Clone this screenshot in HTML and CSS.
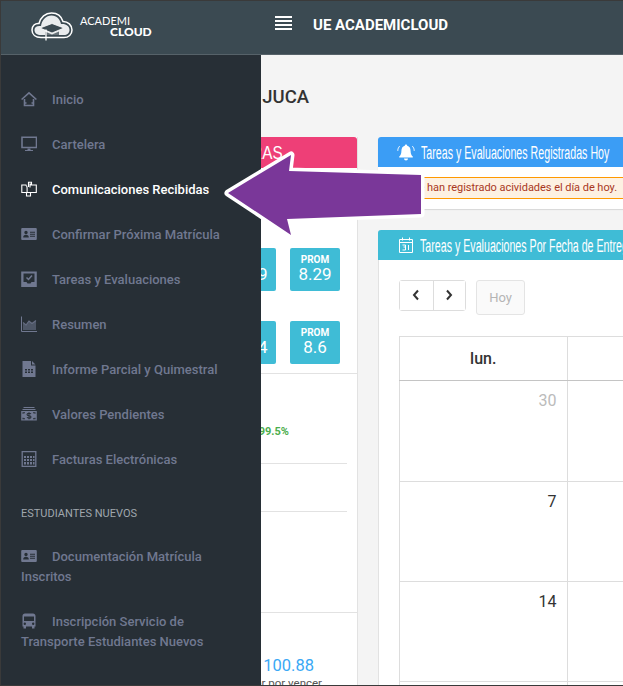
FILE: index.html
```html
<!DOCTYPE html>
<html lang="es">
<head>
<meta charset="utf-8">
<title>UE AcademiCloud</title>
<link rel="stylesheet" href="styles.css">
</head>
<body>
<div class="app">
  <header class="topbar">
    <div class="brand">
      <svg class="brand-logo" width="42" height="30" viewBox="0 0 42 30">
        <path class="cloud" d="M10 25.500C4.500 25.500 1 22.500 1 18C1 14 4 11 8 11.500C9.500 5 14.500 1 20.500 1C26.500 1 30.500 4.500 32 9.500C37 9.500 41 13 41 18C41 22.500 37.500 25.500 33 25.500Z"/>
        <path class="cloud-in" d="M10 23C6 23 3.500 21 3.500 18C3.500 15 6 13.500 10 14C11 8 15 3.500 20.500 3.500C26 3.500 29 7.500 30 12C35 11.500 38.500 14 38.500 18C38.500 21 36 23 33 23Z"/>
        <path class="cap" d="M21 11.500 33 16 21 21 9 16Z"/>
        <path class="cap-base" d="M14 19.500V24H28V19.500L21 22.500Z"/>
        <path class="tassel" d="M15 17.500V28.500"/>
      </svg>
      <div class="brand-text"><span class="brand-a">ACADEMI</span><span class="brand-b">CLOUD</span></div>
    </div>
    <button class="burger" aria-label="Menú"><span></span><span></span><span></span><span></span></button>
    <div class="school">UE ACADEMICLOUD</div>
  </header>

  <main class="content">
    <h1 class="page-title">JUAN PEREZ JUCA</h1>
    <div class="columns">
      <section class="col-left">
        <div class="card-head pink"><span class="narrow">ASIGNATURAS</span></div>
        <div class="stats">
          <div class="stat-row"><div class="tile"><b>P1</b><span>8.29</span></div><div class="tile"><b>PROM</b><span>8.29</span></div></div>
          <div class="stat-row"><div class="tile"><b>P2</b><span>8.64</span></div><div class="tile"><b>PROM</b><span>8.6</span></div></div>
        </div>
        <div class="attendance">
          <div class="att-line"><span class="att-pct">99.5%</span></div>
          <div class="att-line empty"></div>
        </div>
        <div class="balance">
          <div class="bal-num">$ 100.88</div>
          <div class="bal-label">Valor por vencer</div>
        </div>
      </section>

      <section class="col-right">
        <div class="panel panel-today">
          <div class="card-head blue">
            <svg class="head-icon" width="18" height="17" viewBox="0 0 18 17"><path d="M9 0.500a1.200 1.200 0 0 1 1.200 1.300C12.600 2.400 13.600 4.400 13.600 7c0 3 1 4.600 2.200 5.600v1H2.200v-1C3.400 11.600 4.400 10 4.400 7c0-2.600 1-4.600 3.400-5.200A1.200 1.200 0 0 1 9 .5ZM7 14.500h4a2 2 0 0 1-4 0Z" fill="#fff"/><path d="M2.600 2.200C1.400 3.600.8 5 .8 6.800M15.400 2.200c1.200 1.400 1.800 2.800 1.800 4.600" fill="none" stroke="#fff"/></svg>
            <span class="narrow">Tareas y Evaluaciones Registradas Hoy</span>
          </div>
          <div class="panel-body">
            <div class="alert">No se han registrado acividades el día de hoy.</div>
          </div>
        </div>

        <div class="panel panel-cal">
          <div class="card-head teal">
            <svg class="head-icon" width="14" height="16" viewBox="0 0 14 16"><path d="M.5 2.500h13v13H.5zM.5 5.500h13M3.500.5v3M10.500.5v3" fill="none" stroke="#fff"/><path d="M3.500 8h3v2h-2M6.500 10v3h-3M9.500 8v5" fill="none" stroke="#fff"/></svg>
            <span class="narrow">Tareas y Evaluaciones Por Fecha de Entrega</span>
          </div>
          <div class="cal-body">
            <div class="cal-tools">
              <div class="btn-group">
                <button class="btn" aria-label="Anterior"><svg width="8" height="12" viewBox="0 0 8 12"><path d="M6 1.500 2 6l4 4.500" fill="none" stroke="#333" stroke-width="2"/></svg></button>
                <button class="btn" aria-label="Siguiente"><svg width="8" height="12" viewBox="0 0 8 12"><path d="M2 1.500 6 6l-4 4.500" fill="none" stroke="#333" stroke-width="2"/></svg></button>
              </div>
              <button class="btn-today">Hoy</button>
            </div>
            <table class="calendar">
              <thead><tr><th>lun.</th><th>mar.</th></tr></thead>
              <tbody>
                <tr class="first"><td class="muted">30</td><td>1</td></tr>
                <tr><td>7</td><td>8</td></tr>
                <tr><td>14</td><td>15</td></tr>
                <tr><td>21</td><td>22</td></tr>
              </tbody>
            </table>
          </div>
        </div>
      </section>
    </div>
  </main>

  <nav class="sidebar">
    <a class="nav-item"><svg class="nav-icon" viewBox="0 0 16 16"><path d="M.6 8.500 8 1.800 15.400 8.500" fill="none" stroke="currentColor" stroke-width="1.600"/><path d="M3.500 8V14.500H12.500V8M3.500 12H5.500M10.500 12H12.500" fill="none" stroke="currentColor" stroke-width="1.600"/></svg>Inicio</a>
    <a class="nav-item"><svg class="nav-icon" viewBox="0 0 16 16"><path d="M1 1.200h14.500v10.300H1z" fill="none" stroke="currentColor" stroke-width="1.600"/><path d="M6.500 12.500h3v1.500h2.500v1H4v-1h2.500z" fill="currentColor"/></svg>Cartelera</a>
    <a class="nav-item active"><svg class="nav-icon" viewBox="0 0 16 16"><path d="M5.500 4H.8v7.500h14.500V4H9M4.800 4.200c1 .5 1.300 1.500 1.300 2.500v4.800M7.500 6V1.200h3v1.800H9V6.500M5.500 11.500v3.500h4v-3.500" fill="none" stroke="currentColor" stroke-width="1.100"/></svg>Comunicaciones Recibidas</a>
    <a class="nav-item"><svg class="nav-icon" viewBox="0 0 16 16"><path fill-rule="evenodd" d="M1.200 2h13.600a1 1 0 0 1 1 1v10a1 1 0 0 1-1 1H1.200a1 1 0 0 1-1-1V3a1 1 0 0 1 1-1ZM9 5.800v1h5v-1ZM9 7.800v1h5v-1ZM9 9.800v1h5v-1ZM5 4.800a1.700 1.700 0 1 0 0 3.400 1.700 1.700 0 0 0 0-3.400ZM2.200 11.500h5.600c0-1.800-1-2.800-2.800-2.800s-2.800 1-2.800 2.800Z" fill="currentColor"/></svg>Confirmar Próxima Matrícula</a>
    <a class="nav-item"><svg class="nav-icon" viewBox="0 0 16 16"><path fill-rule="evenodd" d="M.2.500h15.600v15.500H.2ZM2.500 2.500v8.500h3l1 1.500h3l1-1.500h3v-8.500Z" fill="currentColor"/><path d="M5.500 6.500 7.500 8.500 11 4.500" fill="none" stroke="currentColor" stroke-width="1.500"/></svg>Tareas y Evaluaciones</a>
    <a class="nav-item"><svg class="nav-icon" viewBox="0 0 16 16"><path d="M.5 .5v15h15.500" fill="none" stroke="currentColor"/><path d="M2 14V7l3 2L8 5l3 2.500 4-3V14Z" fill="currentColor" opacity=".55"/><path d="M2 6.500l3 2.500 3-4 3 2.500 4-3" fill="none" stroke="currentColor" stroke-width="1.200" opacity=".8"/></svg>Resumen</a>
    <a class="nav-item"><svg class="nav-icon" viewBox="0 0 16 16"><path fill-rule="evenodd" d="M1.500 0h8.500v4.500h4.500V16h-13ZM11 0l3.500 3.500H11ZM4 8v1.500h2V8ZM7 8v1.500h2V8ZM10 8v1.500h2V8ZM4 10.500V12h2v-1.500ZM7 10.500V12h2v-1.500ZM10 10.500V12h2v-1.500Z" fill="currentColor"/></svg>Informe Parcial y Quimestral</a>
    <a class="nav-item"><svg class="nav-icon" viewBox="0 0 16 16"><path d="M2.500 1h11v1h-11zM1.500 3h13v1h-13z" fill="currentColor"/><path fill-rule="evenodd" d="M.2 5h15.600v9.500H.2ZM1.500 6.300v1.500h1V7.300h1.500v-1ZM12 6.300v1h1.500v.5h1V6.300ZM1.500 11.700v1.500H4v-1H2.500v-.5ZM13.500 11.700v.5H12v1h2.500v-1.500Z" fill="currentColor"/><path d="M10 8c-.5-.6-1.200-.8-2-.8-1 0-2 .4-2 1.300 0 1.800 4 .7 4 2.400 0 .9-1 1.300-2 1.300-.9 0-1.600-.3-2-.9M8 6.200v7" fill="none" stroke="#272f36" stroke-width="1.100"/></svg>Valores Pendientes</a>
    <a class="nav-item"><svg class="nav-icon" viewBox="0 0 16 16"><path d="M1.200 .7h13.600v14.800H1.200z" fill="none" stroke="currentColor" stroke-width="1.300"/><path d="M3 5h2v2H3zM6 5h2v2H6zM9 5h2v2H9zM12 5h1.500v2H12zM3 8h2v2H3zM6 8h2v2H6zM9 8h2v2H9zM12 8h1.500v2H12zM3 11h2v2.500H3zM6 11h2v2.500H6zM9 11h2v2.500H9zM12 11h1.500v2.500H12z" fill="currentColor"/></svg>Facturas Electrónicas</a>
    <div class="nav-section">ESTUDIANTES NUEVOS</div>
    <a class="nav-item"><svg class="nav-icon" viewBox="0 0 16 16"><path fill-rule="evenodd" d="M1.200 2h13.600a1 1 0 0 1 1 1v10a1 1 0 0 1-1 1H1.200a1 1 0 0 1-1-1V3a1 1 0 0 1 1-1ZM9 5.800v1h5v-1ZM9 7.800v1h5v-1ZM9 9.800v1h5v-1ZM5 4.800a1.700 1.700 0 1 0 0 3.400 1.700 1.700 0 0 0 0-3.400ZM2.200 11.500h5.600c0-1.800-1-2.800-2.800-2.800s-2.800 1-2.800 2.800Z" fill="currentColor"/></svg>Documentación Matrícula Inscritos</a>
    <a class="nav-item"><svg class="nav-icon" viewBox="0 0 16 16"><path fill-rule="evenodd" d="M4 .500h8c1.500 0 2.500 1 2.500 2.500v10.500h-1V15.500h-2.500v-2H5v2H2.500v-2h-1V3C1.500 1.500 2.500.500 4 .500ZM3 3.500V8h10V3.500ZM3.800 9.500a1.200 1.200 0 1 0 0 2.400 1.200 1.200 0 0 0 0-2.400ZM12.200 9.500a1.200 1.200 0 1 0 0 2.400 1.200 1.200 0 0 0 0-2.400Z" fill="currentColor"/></svg>Inscripción Servicio de Transporte Estudiantes Nuevos</a>
  </nav>

  <svg class="arrow" width="206" height="98" viewBox="0 0 206 98">
    <path class="arrow-shape" d="M5 45 68 7 66 23 198 27 198 66 64 71 68 87Z"/>
  </svg>
</div>
</body>
</html>
```
FILE: styles.css
```css
* { box-sizing: border-box; }
html, body { margin: 0; padding: 0; }
body { width: 623px; height: 686px; overflow: hidden; font-family: Roboto, "Liberation Sans", sans-serif; color: #333; background: #f4f4f4; }
.app { position: relative; width: 623px; height: 686px; overflow: hidden; display: flex; flex-direction: column; border: 1px solid #3a3a3a; border-width: 1px 0 1px 1px; }

.topbar { height: 54px; flex: none; display: flex; align-items: center; background: #3b4a52; border-bottom: 1px solid #566269; color: #fff; }
.brand { width: 260px; flex: none; display: flex; align-items: center; padding-left: 30px; gap: 7px; }
.brand-logo { display: block; margin-top: -1px; }
.cloud { fill: none; stroke: #fff; stroke-width: 1.500; }
.cloud-in { fill: #e9ecee; }
.cap { fill: #3b4a52; stroke: #fff; stroke-width: .8; }
.cap-base { fill: #3b4a52; opacity: .75; }
.tassel { stroke: #fff; stroke-width: 1.300; fill: none; }
.brand-text { display: flex; flex-direction: column; font-family: Lato, "Open Sans", sans-serif; line-height: 11px; margin-top: -3px; }
.brand-a { font-weight: 400; font-size: 11px; }
.brand-b { font-weight: 900; margin-left: 30px; font-size: 12px; }
.burger { width: 17px; height: 14px; padding: 0; margin-left: 14px; margin-top: -10px; border: 0; background: none; display: flex; flex-direction: column; justify-content: space-between; }
.burger span { display: block; height: 2px; background: #fff; }
.school { margin-left: 21px; font-size: 15px; font-weight: 700; margin-top: -6px; }

.content { flex: 1; min-height: 0; }
.page-title { margin: 0; padding: 31px 0 0 0; width: 308px; text-align: right; height: 82px; font-size: 18.500px; font-weight: 500; line-height: 22px; color: #333; white-space: nowrap; }
.columns { display: flex; gap: 20px; padding-left: 20px; }
.col-left { width: 337px; flex: none; background: #fff; border-right: 1px solid #e2e2e2; height: 560px; }
.col-right { width: 340px; flex: none; }

.card-head { height: 30px; display: flex; align-items: center; gap: 6px; color: #fff; border-radius: 3px 3px 0 0; overflow: hidden; white-space: nowrap; }
.pink { background: #ee3f77; height: 31px; justify-content: flex-end; padding-right: 74px; }
.blue { background: #3b9df5; padding-left: 19px; }
.teal { background: #3fbcd6; padding-left: 21px; gap: 7px; }
.head-icon { flex: none; }
.narrow { font-family: "Liberation Sans", sans-serif; font-size: 18px; line-height: 22px; margin-top: 1px; display: inline-block; transform: scaleX(.592); transform-origin: left center; }
.pink .narrow { transform: scaleX(.85); transform-origin: right center; }

.stats { padding: 80px 17px 0 0; height: 206px; border-bottom: 1px solid #e2e2e2; display: flex; flex-direction: column; gap: 30px; }
.stat-row { display: flex; justify-content: flex-end; gap: 14px; }
.tile { width: 50px; height: 43px; background: #3fbcd6; border-radius: 2px; color: #fff; display: flex; flex-direction: column; align-items: center; padding-top: 7px; }
.tile b { font-size: 10px; line-height: 10px; font-weight: 700; }
.tile span { font-size: 17px; line-height: 18px; }

.attendance { height: 238px; margin-right: 10px; padding-top: 49px; }
.att-line { height: 41px; border-bottom: 1px solid #e2e2e2; text-align: right; padding-right: 58px; }
.att-line.empty { height: 48px; }
.att-pct { font-size: 11px; font-weight: 700; color: #4cae4c; line-height: 16px; display: block; padding-top: 1px; }

.balance { border-top: 1px solid #e2e2e2; padding: 42px 35px 0 0; text-align: right; }
.bal-num { font-size: 16.500px; line-height: 22px; color: #3aa8f5; margin-right: 8px; }
.bal-label { font-size: 11.500px; line-height: 12px; color: #555; }

.panel { background: #fff; border-radius: 3px 3px 0 0; }
.panel-today { height: 72px; box-shadow: 0 1px 1px rgba(0,0,0,.12); margin-bottom: 21px; }
.panel-body { padding-top: 10px; }
.alert { width: 245px; height: 22px; background: #fdf1e2; border-top: 1px solid #f90; border-bottom: 1px solid #f90; font-size: 11px; line-height: 20px; color: #a9381e; letter-spacing: -.04px; padding-right: 6px; text-align: right; white-space: nowrap; }
.panel-cal { border-left: 1px solid #e2e2e2; }
.panel-cal .card-head { margin-left: -1px; }
.cal-body { padding: 20px 20px 0 20px; }
.cal-tools { display: flex; align-items: flex-start; gap: 10px; height: 56px; }
.btn-group { display: flex; height: 31px; border: 1px solid #ddd; border-radius: 3px; }
.btn { width: 32.500px; border: 0; padding: 0; background: #fff; display: flex; align-items: center; justify-content: center; }
.btn + .btn { border-left: 1px solid #ddd; }
.btn svg { margin-top: -2px; }
.btn-today { width: 49px; height: 35px; border: 1px solid #e4e4e4; border-radius: 3px; background: #fafafa; color: #b5b5b5; font: 400 13px Roboto, sans-serif; }
.calendar { border-collapse: collapse; table-layout: fixed; width: 336px; }
.calendar th, .calendar td { border: 1px solid #ddd; padding: 0; }
.calendar th { height: 44px; font-size: 16px; font-weight: 500; color: #333; border-bottom-color: #c4c4c4; }
.calendar td { height: 100px; vertical-align: top; text-align: right; font-size: 16px; line-height: 18px; padding: 11px 10px 0 0; color: #333; }
.calendar .first td { height: 101px; }
.calendar td.muted { color: #bbb; }

.sidebar { position: absolute; left: 0; top: 54px; bottom: 0; width: 260px; background: #272f36; padding: 35px 20px 0 20px; color: #707890; }
.nav-item { display: block; font-size: 13px; font-weight: 500; line-height: 20px; margin-bottom: 25px; color: #707890; }
.nav-icon { width: 16px; height: 16px; margin-right: 15px; vertical-align: -3px; display: inline-block; }
.nav-item.active { color: #fff; }
.nav-section { font-size: 11px; line-height: 14px; color: #a0a7ae; margin: 37px 0 26px; }

.arrow { position: absolute; left: 222px; top: 147px; }
.arrow-shape { fill: #7a3799; stroke: #fff; stroke-width: 7; stroke-linejoin: round; paint-order: stroke; }
```
